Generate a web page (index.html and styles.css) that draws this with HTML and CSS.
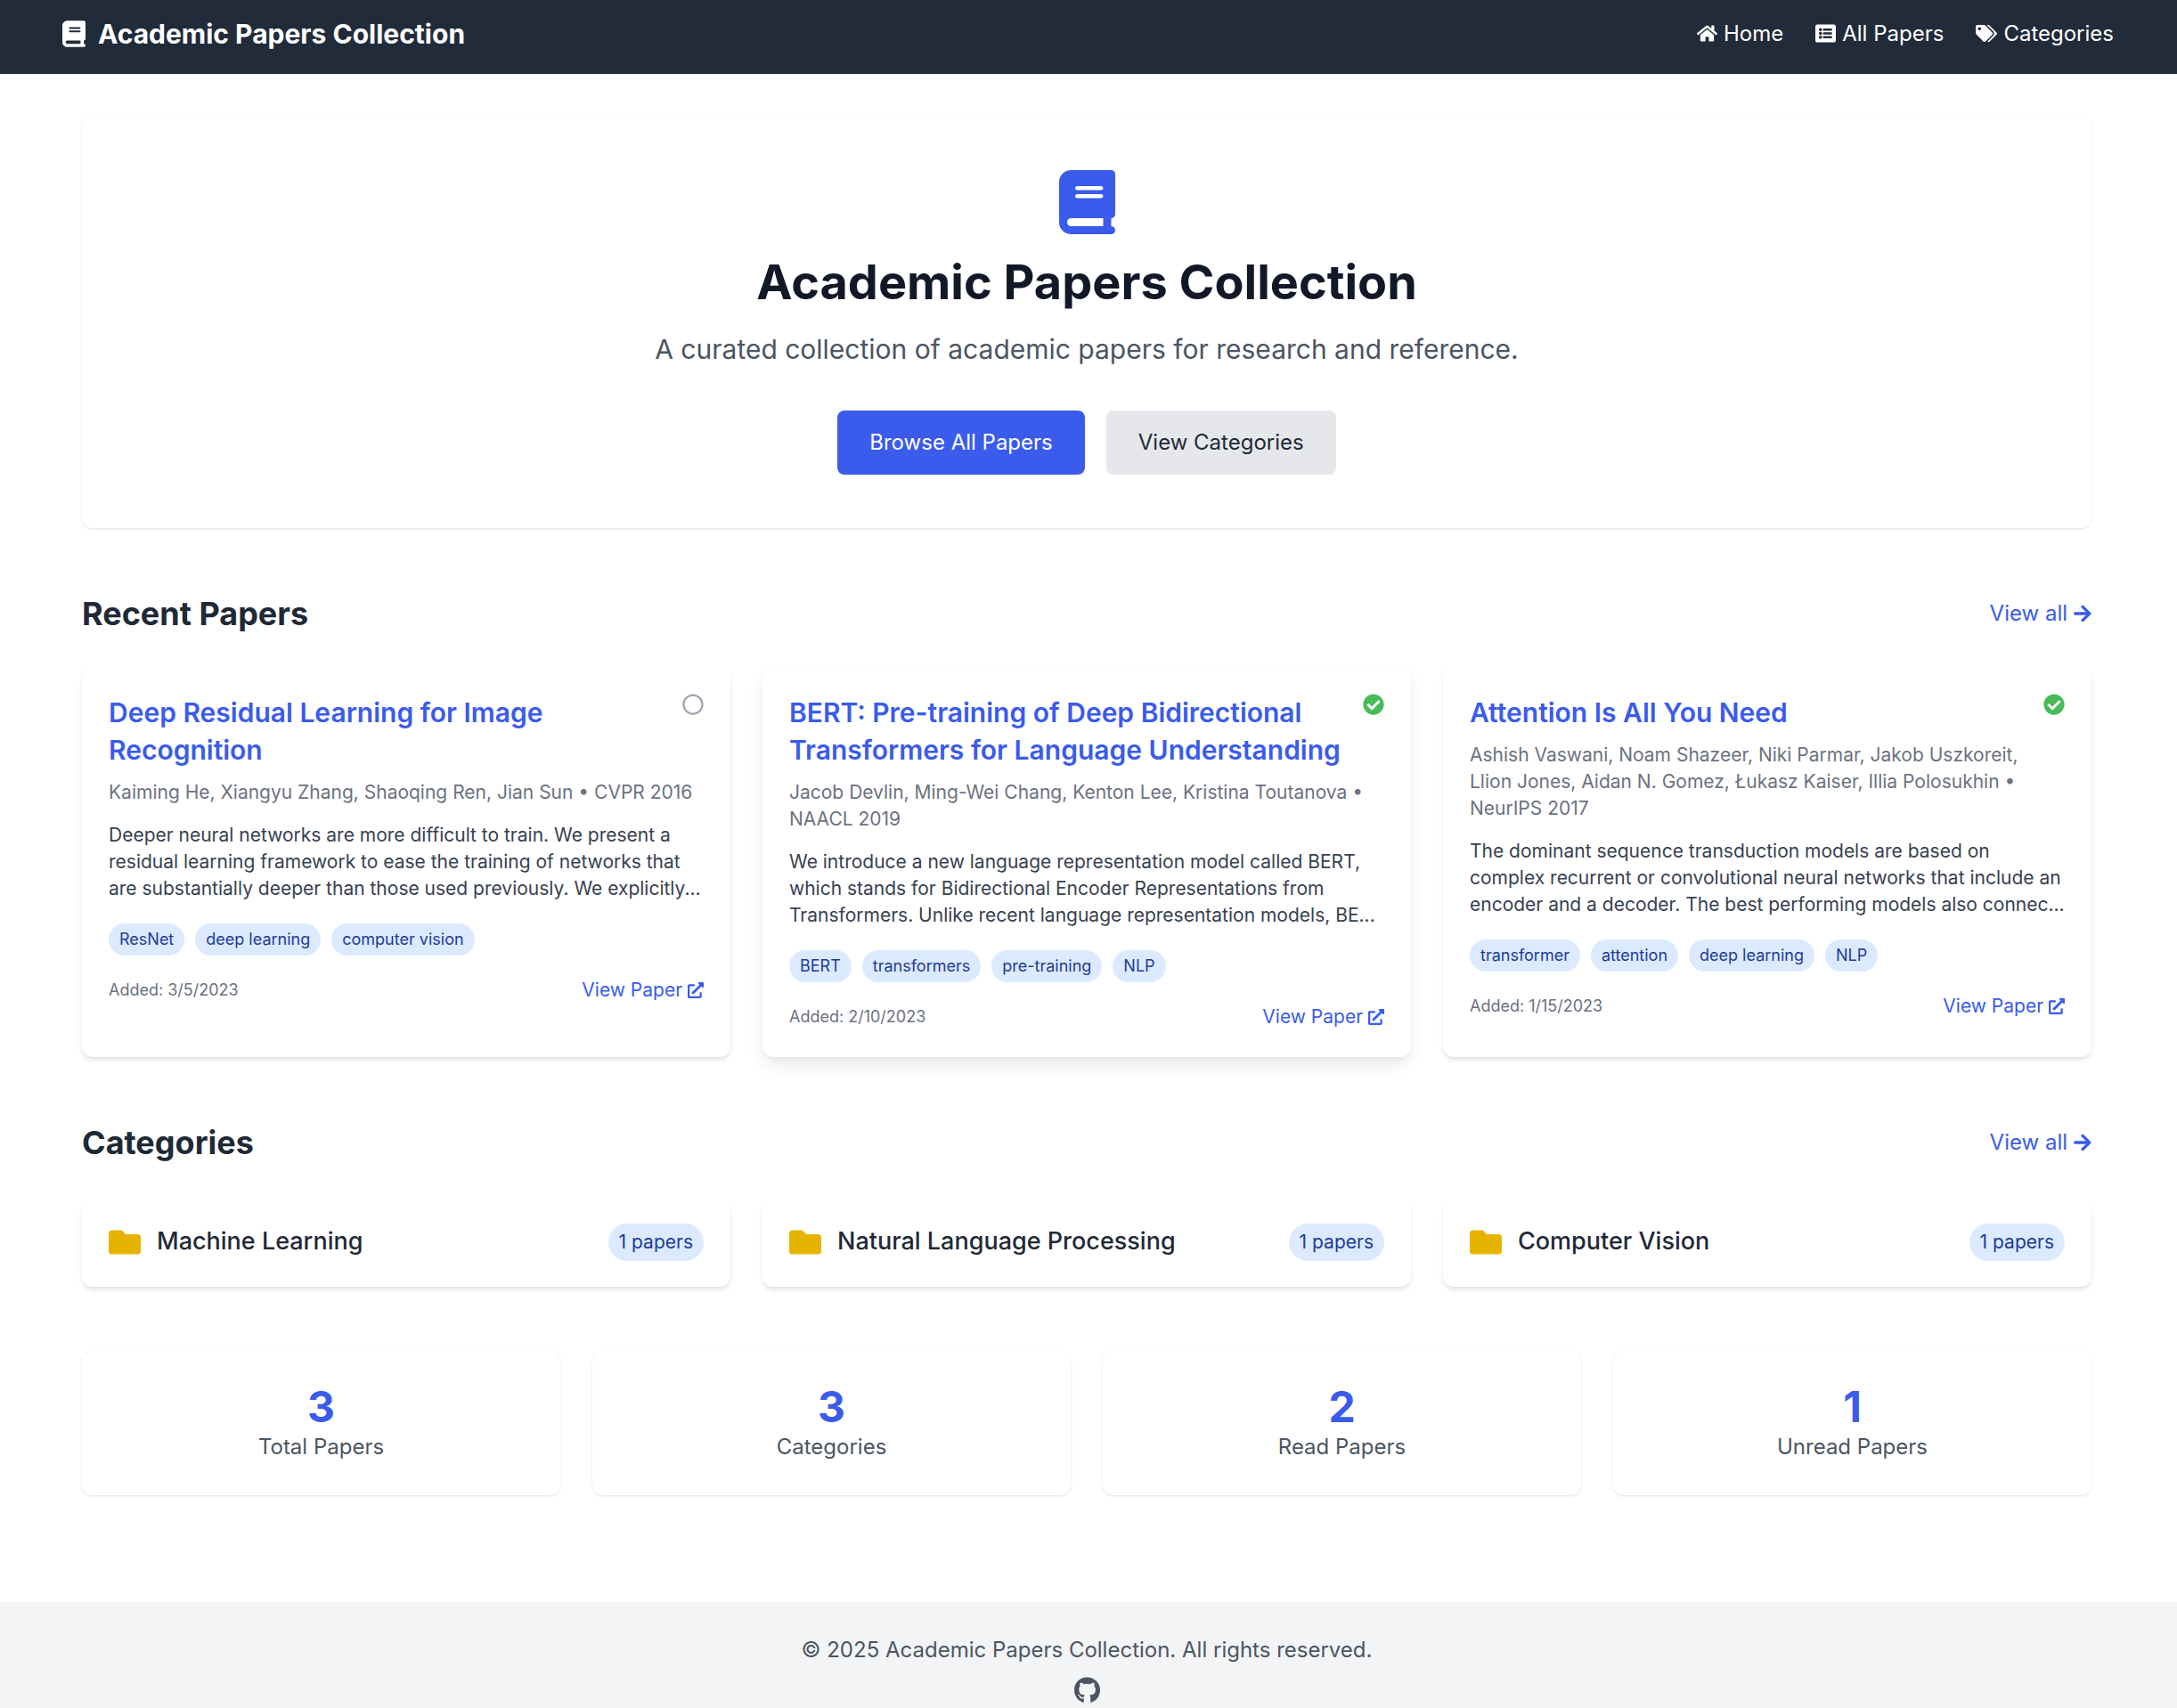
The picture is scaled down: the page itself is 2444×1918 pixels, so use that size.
FILE: index.html
```html
<!DOCTYPE html>
<html lang="en">
<head>
    <meta charset="UTF-8">
    <meta name="viewport" content="width=device-width, initial-scale=1.0">
    <title>Academic Papers Collection</title>
    <link rel="stylesheet" href="styles.css">
</head>
<body>
    <svg class="icon-defs" aria-hidden="true">
        <symbol id="i-book" viewBox="0 0 448 512"><path d="M96 0C43 0 0 43 0 96V416c0 53 43 96 96 96H384h32c17.7 0 32-14.3 32-32s-14.3-32-32-32V384c17.7 0 32-14.3 32-32V32c0-17.7-14.3-32-32-32H384 96zm0 384H352v64H96c-17.7 0-32-14.3-32-32s14.3-32 32-32zm32-240c0-8.8 7.2-16 16-16H336c8.8 0 16 7.2 16 16s-7.2 16-16 16H144c-8.8 0-16-7.2-16-16zm16 48H336c8.8 0 16 7.2 16 16s-7.2 16-16 16H144c-8.8 0-16-7.2-16-16s7.2-16 16-16z"/></symbol>
        <symbol id="i-home" viewBox="0 0 576 512"><path d="M280.37 148.26L96 300.11V464a16 16 0 0 0 16 16l112.06-.29a16 16 0 0 0 15.92-16V368a16 16 0 0 1 16-16h64a16 16 0 0 1 16 16v95.64a16 16 0 0 0 16 16.05L464 480a16 16 0 0 0 16-16V300L295.67 148.26a12.19 12.19 0 0 0-15.3 0zM571.6 251.47L488 182.56V44.05a12 12 0 0 0-12-12h-56a12 12 0 0 0-12 12v72.61L318.47 43a48 48 0 0 0-61 0L4.34 251.47a12 12 0 0 0-1.6 16.9l25.5 31A12 12 0 0 0 45.15 301l235.22-193.74a12.19 12.19 0 0 1 15.3 0L530.9 301a12 12 0 0 0 16.9-1.6l25.5-31a12 12 0 0 0-1.7-16.93z"/></symbol>
        <symbol id="i-list" viewBox="0 0 512 512"><path d="M464 480H48c-26.51 0-48-21.49-48-48V80c0-26.51 21.49-48 48-48h416c26.51 0 48 21.49 48 48v352c0 26.51-21.49 48-48 48zM128 120c-22.091 0-40 17.909-40 40s17.909 40 40 40 40-17.909 40-40-17.909-40-40-40zm0 96c-22.091 0-40 17.909-40 40s17.909 40 40 40 40-17.909 40-40-17.909-40-40-40zm0 96c-22.091 0-40 17.909-40 40s17.909 40 40 40 40-17.909 40-40-17.909-40-40-40zm288-136v-32c0-6.627-5.373-12-12-12H204c-6.627 0-12 5.373-12 12v32c0 6.627 5.373 12 12 12h200c6.627 0 12-5.373 12-12zm0 96v-32c0-6.627-5.373-12-12-12H204c-6.627 0-12 5.373-12 12v32c0 6.627 5.373 12 12 12h200c6.627 0 12-5.373 12-12zm0 96v-32c0-6.627-5.373-12-12-12H204c-6.627 0-12 5.373-12 12v32c0 6.627 5.373 12 12 12h200c6.627 0 12-5.373 12-12z"/></symbol>
        <symbol id="i-tags" viewBox="0 0 640 512"><path d="M497.941 225.941L286.059 14.059A48 48 0 0 0 252.118 0H48C21.49 0 0 21.49 0 48v204.118a48 48 0 0 0 14.059 33.941l211.882 211.882c18.744 18.745 49.136 18.746 67.882 0l204.118-204.118c18.745-18.745 18.745-49.137 0-67.882zM112 160c-26.51 0-48-21.49-48-48s21.49-48 48-48 48 21.49 48 48-21.49 48-48 48zm513.941 133.823L421.823 497.941c-18.745 18.745-49.137 18.745-67.882 0l-.36-.36L527.64 323.522c16.999-16.999 26.36-39.6 26.36-63.64s-9.362-46.641-26.36-63.64L331.397 0h48.721a48 48 0 0 1 33.941 14.059l211.882 211.882c18.745 18.745 18.745 49.137 0 67.882z"/></symbol>
        <symbol id="i-external" viewBox="0 0 512 512"><path d="M432 320H400a16 16 0 0 0-16 16V448H64V128H208a16 16 0 0 0 16-16V80a16 16 0 0 0-16-16H48A48 48 0 0 0 0 112V464a48 48 0 0 0 48 48H400a48 48 0 0 0 48-48V336A16 16 0 0 0 432 320ZM488 0h-128c-21.37 0-32.05 25.91-17 41l35.73 35.73L135 320.37a24 24 0 0 0 0 34L157.67 377a24 24 0 0 0 34 0L435.28 133.32 471 169c15 15 41 4.5 41-17V24A24 24 0 0 0 488 0Z"/></symbol>
        <symbol id="i-arrow" viewBox="0 0 448 512"><path d="M190.5 66.9l22.2-22.2c9.4-9.4 24.6-9.4 33.9 0L441 239c9.4 9.4 9.4 24.6 0 33.9L246.6 467.3c-9.4 9.4-24.6 9.4-33.9 0l-22.2-22.2c-9.5-9.5-9.3-25 .4-34.3L311.4 296H24c-13.3 0-24-10.7-24-24v-32c0-13.3 10.7-24 24-24h287.4L190.9 101.2c-9.8-9.3-10-24.8-.4-34.3z"/></symbol>
        <symbol id="i-folder" viewBox="0 0 512 512"><path d="M464 128H272l-64-64H48C21.49 64 0 85.49 0 112v288c0 26.51 21.49 48 48 48h416c26.51 0 48-21.49 48-48V176c0-26.51-21.49-48-48-48z"/></symbol>
        <symbol id="i-check" viewBox="0 0 512 512"><path d="M504 256c0 136.967-111.033 248-248 248S8 392.967 8 256 119.033 8 256 8s248 111.033 248 248zM227.314 387.314l184-184c6.248-6.248 6.248-16.379 0-22.627l-22.627-22.627c-6.248-6.249-16.379-6.249-22.628 0L216 308.118l-70.059-70.059c-6.248-6.248-16.379-6.248-22.628 0l-22.627 22.627c-6.248 6.248-6.248 16.379 0 22.627l104 104c6.249 6.25 16.379 6.25 22.628.001z"/></symbol>
        <symbol id="i-circle" viewBox="0 0 512 512"><path d="M256 8C119 8 8 119 8 256s111 248 248 248 248-111 248-248S393 8 256 8zm0 448c-110.5 0-200-89.5-200-200S145.5 56 256 56s200 89.5 200 200-89.5 200-200 200z"/></symbol>
        <symbol id="i-github" viewBox="0 0 496 512"><path d="M165.9 397.4c0 2-2.3 3.6-5.2 3.6-3.3 0-5.6-1.6-5.6-3.6 0-2 2.3-3.6 5.2-3.6 3-.3 5.6 1.3 5.6 3.6zm-31.1-4.5c-.7 2 1.3 4.3 4.3 4.9 2.6 1 5.6 0 6.2-2s-1.3-4.3-4.3-5.2c-2.6-.7-5.5.3-6.2 2.3zm44.2-1.7c-2.9.7-4.9 2.6-4.6 4.9.3 2 2.9 3.3 5.9 2.6 2.9-.7 4.9-2.6 4.6-4.6-.3-1.9-3-3.2-5.9-2.9zM244.8 8C106.1 8 0 113.3 0 252c0 110.9 69.8 205.8 169.5 239.2 12.8 2.3 17.3-5.6 17.3-12.1 0-6.2-.3-40.4-.3-61.4 0 0-70 15-84.7-29.8 0 0-11.4-29.1-27.8-36.6 0 0-22.9-15.7 1.6-15.4 0 0 24.9 2 38.6 25.8 21.9 38.6 58.6 27.5 72.9 20.9 2.3-16 8.8-27.1 16-33.7-55.9-6.2-112.3-14.3-112.3-110.5 0-27.5 7.6-41.3 23.6-58.9-2.6-6.5-11.1-33.3 2.6-67.9 20.9-6.5 69 27 69 27 20-5.6 41.5-8.5 62.8-8.5s42.8 2.9 62.8 8.5c0 0 48.1-33.6 69-27 13.7 34.7 5.2 61.4 2.6 67.9 16 17.7 25.8 31.5 25.8 58.9 0 96.5-58.9 104.2-114.8 110.5 9.2 7.9 17 22.9 17 46.4 0 33.7-.3 75.4-.3 83.6 0 6.5 4.6 14.4 17.3 12.1C428.2 457.8 496 362.9 496 252 496 113.3 383.5 8 244.8 8zM97.2 352.9c-1.3 1-1 3.3.7 5.2 1.6 1.6 3.9 2.3 5.2 1 1.3-1 1-3.3-.7-5.2-1.6-1.6-3.9-2.3-5.2-1zm-10.8-8.1c-.7 1.3.3 2.9 2.3 3.9 1.6 1 3.6.7 4.3-.7.7-1.3-.3-2.9-2.3-3.9-2-.6-3.6-.3-4.3.7zm32.4 35.6c-1.6 1.3-1 4.3 1.3 6.2 2.3 2.3 5.2 2.6 6.5 1 1.3-1.3.7-4.3-1.3-6.2-2.2-2.3-5.2-2.6-6.5-1zm-11.4-14.7c-1.6 1-1.6 3.6 0 5.9 1.6 2.3 4.3 3.3 5.6 2.3 1.6-1.3 1.6-3.9 0-6.2-1.4-2.3-4-3.3-5.6-2z"/></symbol>
    </svg>

    <header class="topbar">
        <a class="brand" href="#">
            <svg class="brand-icon"><use href="#i-book"/></svg>
            <span>Academic Papers Collection</span>
        </a>
        <nav class="topnav">
            <a href="#"><svg class="nav-icon nav-icon-home"><use href="#i-home"/></svg>Home</a>
            <a href="#"><svg class="nav-icon nav-icon-list"><use href="#i-list"/></svg>All Papers</a>
            <a href="#"><svg class="nav-icon nav-icon-tags"><use href="#i-tags"/></svg>Categories</a>
        </nav>
    </header>

    <main class="content">
        <section class="hero">
            <svg class="hero-icon"><use href="#i-book"/></svg>
            <h1>Academic Papers Collection</h1>
            <p class="hero-text">A curated collection of academic papers for research and reference.</p>
            <div class="hero-actions">
                <a class="btn btn-primary" href="#">Browse All Papers</a>
                <a class="btn btn-muted" href="#">View Categories</a>
            </div>
        </section>

        <section class="block block-papers">
            <div class="block-head">
                <h2>Recent Papers</h2>
                <a class="view-all" href="#">View all <svg class="arrow-icon"><use href="#i-arrow"/></svg></a>
            </div>
            <div class="card-grid">
                <article class="card paper">
                    <div class="paper-head">
                        <h3><a href="#">Deep Residual Learning for Image Recognition</a></h3>
                        <svg class="status status-unread"><use href="#i-circle"/></svg>
                    </div>
                    <p class="paper-meta">Kaiming He, Xiangyu Zhang, Shaoqing Ren, Jian Sun • CVPR 2016</p>
                    <p class="paper-abstract">Deeper neural networks are more difficult to train. We present a residual learning framework to ease the training of networks that are substantially deeper than those used previously. We explicitly...</p>
                    <div class="tags">
                        <span class="tag">ResNet</span>
                        <span class="tag">deep learning</span>
                        <span class="tag">computer vision</span>
                    </div>
                    <div class="paper-foot">
                        <span class="added">Added: 3/5/2023</span>
                        <a class="paper-link" href="#">View Paper <svg class="ext-icon"><use href="#i-external"/></svg></a>
                    </div>
                </article>

                <article class="card paper paper-raised">
                    <div class="paper-head">
                        <h3><a href="#">BERT: Pre-training of Deep Bidirectional Transformers for Language Understanding</a></h3>
                        <svg class="status status-read"><use href="#i-check"/></svg>
                    </div>
                    <p class="paper-meta">Jacob Devlin, Ming-Wei Chang, Kenton Lee, Kristina Toutanova • NAACL 2019</p>
                    <p class="paper-abstract">We introduce a new language representation model called BERT, which stands for Bidirectional Encoder Representations from Transformers. Unlike recent language representation models, BE...</p>
                    <div class="tags">
                        <span class="tag">BERT</span>
                        <span class="tag">transformers</span>
                        <span class="tag">pre-training</span>
                        <span class="tag">NLP</span>
                    </div>
                    <div class="paper-foot">
                        <span class="added">Added: 2/10/2023</span>
                        <a class="paper-link" href="#">View Paper <svg class="ext-icon"><use href="#i-external"/></svg></a>
                    </div>
                </article>

                <article class="card paper">
                    <div class="paper-head">
                        <h3><a href="#">Attention Is All You Need</a></h3>
                        <svg class="status status-read"><use href="#i-check"/></svg>
                    </div>
                    <p class="paper-meta">Ashish Vaswani, Noam Shazeer, Niki Parmar, Jakob Uszkoreit, Llion Jones, Aidan N. Gomez, Łukasz Kaiser, Illia Polosukhin • NeurIPS 2017</p>
                    <p class="paper-abstract">The dominant sequence transduction models are based on complex recurrent or convolutional neural networks that include an encoder and a decoder. The best performing models also connec...</p>
                    <div class="tags">
                        <span class="tag">transformer</span>
                        <span class="tag">attention</span>
                        <span class="tag">deep learning</span>
                        <span class="tag">NLP</span>
                    </div>
                    <div class="paper-foot">
                        <span class="added">Added: 1/15/2023</span>
                        <a class="paper-link" href="#">View Paper <svg class="ext-icon"><use href="#i-external"/></svg></a>
                    </div>
                </article>
            </div>
        </section>

        <section class="block block-categories">
            <div class="block-head">
                <h2>Categories</h2>
                <a class="view-all" href="#">View all <svg class="arrow-icon"><use href="#i-arrow"/></svg></a>
            </div>
            <div class="card-grid">
                <a class="card category" href="#">
                    <svg class="folder-icon"><use href="#i-folder"/></svg>
                    <span class="category-name">Machine Learning</span>
                    <span class="count">1 papers</span>
                </a>
                <a class="card category" href="#">
                    <svg class="folder-icon"><use href="#i-folder"/></svg>
                    <span class="category-name">Natural Language Processing</span>
                    <span class="count">1 papers</span>
                </a>
                <a class="card category" href="#">
                    <svg class="folder-icon"><use href="#i-folder"/></svg>
                    <span class="category-name">Computer Vision</span>
                    <span class="count">1 papers</span>
                </a>
            </div>
        </section>

        <section class="stats">
            <div class="stat"><div class="stat-num">3</div><div class="stat-label">Total Papers</div></div>
            <div class="stat"><div class="stat-num">3</div><div class="stat-label">Categories</div></div>
            <div class="stat"><div class="stat-num">2</div><div class="stat-label">Read Papers</div></div>
            <div class="stat"><div class="stat-num">1</div><div class="stat-label">Unread Papers</div></div>
        </section>
    </main>

    <footer class="site-foot">
        <p>© 2025 Academic Papers Collection. All rights reserved.</p>
        <a href="#"><svg class="github-icon"><use href="#i-github"/></svg></a>
    </footer>
</body>
</html>
```

FILE: styles.css
```css
* {
    box-sizing: border-box;
}

html, body {
    margin: 0;
    padding: 0;
}

body {
    font-family: 'Inter', 'Liberation Sans', sans-serif;
    font-size: 21px;
    line-height: 30px;
    color: #1f2937;
    background-color: #fff;
}

a {
    color: inherit;
    text-decoration: none;
}

svg {
    fill: currentColor;
    flex: none;
}

h1, h2, h3, p {
    margin: 0;
}

.icon-defs {
    display: none;
}

/* top bar */
.topbar {
    height: 83px;
    padding: 0 71px 8px 70px;
    display: flex;
    justify-content: space-between;
    align-items: center;
    background-color: #222b3a;
    color: #fff;
}

.brand {
    display: flex;
    align-items: center;
    gap: 14px;
    font-size: 30px;
    font-weight: 700;
}

.brand-icon {
    width: 26px;
    height: 30px;
}

.topnav {
    display: flex;
    gap: 36px;
    font-size: 24px;
}

.topnav a {
    display: flex;
    align-items: center;
    gap: 7px;
}

.nav-icon-home { width: 23px; height: 21px; }
.nav-icon-list { width: 23px; height: 23px; }
.nav-icon-tags { width: 24px; height: 19px; }

/* main column */
.content {
    padding: 48px 96px 0 92px;
}

.card {
    background-color: #fff;
    border-radius: 12px;
    box-shadow: 0 4px 6px -1px rgba(0, 0, 0, 0.1), 0 2px 4px -1px rgba(0, 0, 0, 0.06);
}

.hero {
    height: 462px;
    padding-top: 60px;
    text-align: center;
    border-radius: 12px;
    box-shadow: 0 1px 3px rgba(0, 0, 0, 0.12);
}

.hero-icon {
    display: block;
    width: 63px;
    height: 72px;
    margin: 0 auto;
    color: #3a5bec;
}

.hero h1 {
    margin-top: 21px;
    font-size: 54px;
    line-height: 66px;
    font-weight: 700;
    color: #111827;
}

.hero-text {
    margin-top: 22px;
    font-size: 30px;
    line-height: 40px;
    color: #4b5563;
}

.hero-actions {
    margin-top: 49px;
    display: flex;
    justify-content: center;
    gap: 24px;
}

.btn {
    height: 72px;
    padding: 0 36px;
    display: flex;
    align-items: center;
    border-radius: 8px;
    font-size: 24px;
}

.btn-primary {
    background-color: #3a5bec;
    color: #fff;
}

.btn-muted {
    background-color: #e5e7eb;
    color: #1f2937;
}

/* sections */
.block-papers {
    margin-top: 72px;
}

.block-categories {
    margin-top: 72px;
}

.block-head {
    height: 48px;
    display: flex;
    justify-content: space-between;
    align-items: center;
    margin-bottom: 36px;
}

.block-categories .block-head {
    margin-bottom: 38px;
}

.block-head h2 {
    font-size: 36px;
    font-weight: 700;
}

.view-all {
    display: flex;
    align-items: center;
    gap: 7px;
    font-size: 24px;
    color: #3a5bec;
}

.arrow-icon {
    width: 20px;
    height: 22px;
}

.card-grid {
    display: grid;
    grid-template-columns: repeat(3, 1fr);
    gap: 36px;
}

/* paper cards */
.paper {
    padding: 30px;
}

.paper-raised {
    box-shadow: 0 10px 20px -3px rgba(0, 0, 0, 0.1), 0 4px 6px -2px rgba(0, 0, 0, 0.05);
}

.paper-head {
    display: flex;
    justify-content: space-between;
    gap: 24px;
}

.paper-head h3 {
    font-size: 30px;
    line-height: 42px;
    font-weight: 600;
    color: #3a5bec;
}

.status {
    width: 24px;
    height: 24px;
}

.status-read { color: #48bb58; }
.status-unread { color: #9ca3af; }

.paper-meta {
    margin-top: 12px;
    color: #6b7280;
}

.paper-abstract {
    margin-top: 18px;
    color: #374151;
}

.tags {
    margin-top: 24px;
    display: flex;
    flex-wrap: wrap;
    gap: 12px;
}

.tag, .count {
    background-color: #dbeafe;
    color: #1e3a9a;
    border-radius: 999px;
}

.tag {
    height: 36px;
    padding: 0 12px;
    display: flex;
    align-items: center;
    font-size: 18px;
}

.paper-foot {
    margin-top: 24px;
    display: flex;
    justify-content: space-between;
    align-items: center;
}

.paper-link {
    color: #3a5bec;
}

.added {
    font-size: 18px;
    color: #6b7280;
}

.ext-icon {
    width: 18px;
    height: 18px;
    vertical-align: -2px;
}

/* category cards */
.category {
    height: 100px;
    padding: 0 30px;
    display: flex;
    align-items: center;
}

.folder-icon {
    width: 36px;
    height: 36px;
    color: #e6b400;
}

.category-name {
    margin-left: 18px;
    padding-bottom: 2px;
    flex: 1;
    font-size: 27px;
    font-weight: 500;
    color: #1f2937;
}

.count {
    height: 42px;
    padding: 0 12px;
    display: flex;
    align-items: center;
}

/* stats */
.stats {
    margin-top: 72px;
    display: grid;
    grid-template-columns: repeat(4, 1fr);
    gap: 36px;
}

.stat {
    height: 162px;
    padding-top: 39px;
    text-align: center;
    border-radius: 12px;
    box-shadow: 0 1px 3px rgba(0, 0, 0, 0.12);
}

.stat-num {
    font-size: 48px;
    line-height: 48px;
    font-weight: 700;
    color: #3a5bec;
}

.stat-label {
    margin-top: 6px;
    font-size: 24px;
    color: #4b5563;
}

/* footer */
.site-foot {
    margin-top: 120px;
    height: 119px;
    padding: 39px 4px 0 0;
    text-align: center;
    background-color: #f3f4f6;
    color: #4b5563;
    font-size: 24px;
}

.github-icon {
    display: block;
    width: 29px;
    height: 30px;
    margin: 15px auto 0;
}
```
